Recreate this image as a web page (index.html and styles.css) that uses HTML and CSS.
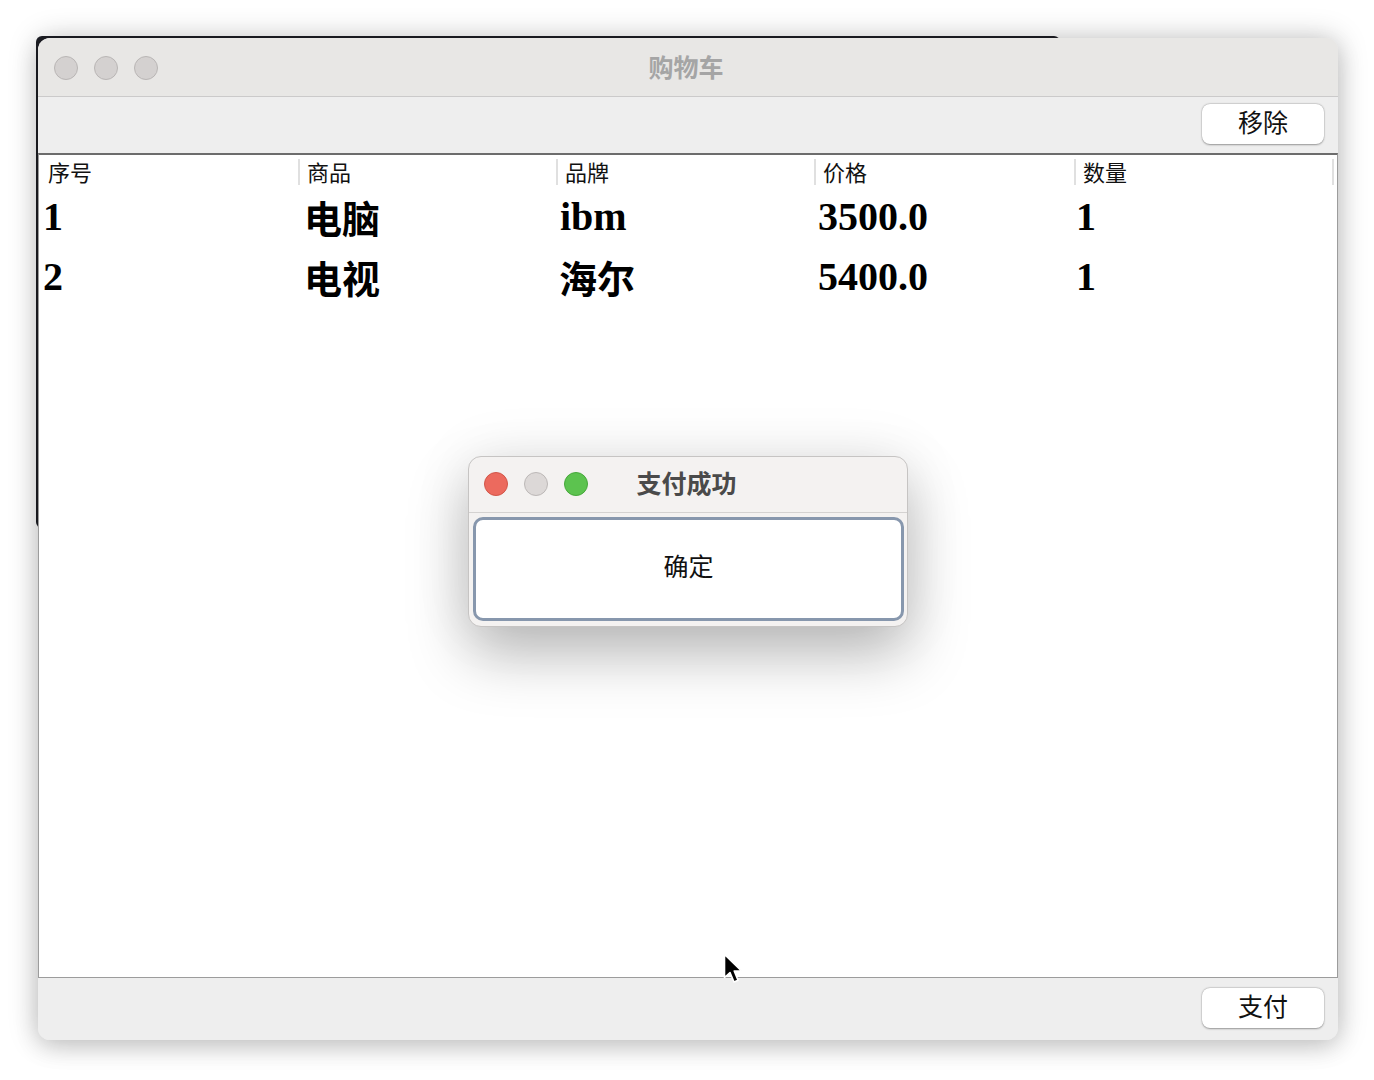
FILE: index.html
```html
<!DOCTYPE html>
<html lang="zh">
<head>
<meta charset="utf-8">
<title>购物车</title>
<link rel="stylesheet" href="styles.css">
</head>
<body>
<div class="desktop">
  <div class="bg-window"></div>
  <div class="window">
    <div class="titlebar">
      <div class="lights">
        <span class="light gray"></span>
        <span class="light gray"></span>
        <span class="light gray"></span>
      </div>
      <div class="title">购物车</div>
    </div>
    <div class="toolbar">
      <button class="btn">移除</button>
    </div>
    <div class="table">
      <div class="thead">
        <div class="th">序号</div>
        <div class="th">商品</div>
        <div class="th">品牌</div>
        <div class="th">价格</div>
        <div class="th">数量</div>
      </div>
      <div class="tr">
        <div class="td">1</div>
        <div class="td cjk">电脑</div>
        <div class="td">ibm</div>
        <div class="td">3500.0</div>
        <div class="td">1</div>
      </div>
      <div class="tr">
        <div class="td">2</div>
        <div class="td cjk">电视</div>
        <div class="td cjk">海尔</div>
        <div class="td">5400.0</div>
        <div class="td">1</div>
      </div>
    </div>
    <div class="bottombar">
      <button class="btn">支付</button>
    </div>
  </div>

  <div class="dialog">
    <div class="dtitlebar">
      <div class="lights">
        <span class="light red"></span>
        <span class="light dgray"></span>
        <span class="light green"></span>
      </div>
      <div class="dtitle">支付成功</div>
    </div>
    <div class="dbody">
      <button class="okbtn">确定</button>
    </div>
  </div>

  <svg class="cursor" width="24" height="34" viewBox="0 0 24 34">
    <path d="M1.5 1.5 L1.5 24.5 L7 19.5 L11 29 L15 27.3 L11.2 18 L18.5 18 Z" fill="#000" stroke="#fff" stroke-width="1.6" stroke-linejoin="round"/>
  </svg>
</div>
</body>
</html>
```

FILE: styles.css
```css
* { box-sizing: border-box; }
html, body { margin: 0; padding: 0; background: #ffffff; }
body {
  width: 1374px;
  height: 1080px;
  overflow: hidden;
  font-family: "Noto Sans CJK SC", "Noto Sans", sans-serif;
}
.desktop {
  position: relative;
  width: 1374px;
  height: 1080px;
}
.bg-window {
  position: absolute;
  left: 36px;
  top: 36px;
  width: 1024px;
  height: 492px;
  background: #1d1e25;
  border-radius: 6px;
}
.window {
  position: absolute;
  left: 38px;
  top: 38px;
  width: 1300px;
  height: 1002px;
  border-radius: 12px;
  overflow: hidden;
  display: flex;
  flex-direction: column;
  background: #eeeeee;
  box-shadow: 0 0 30px rgba(0,0,0,0.22), 0 8px 24px rgba(0,0,0,0.12);
}
.titlebar {
  position: relative;
  height: 59px;
  flex: none;
  background: #e8e7e5;
  border-bottom: 1px solid #cbcaca;
  display: flex;
  align-items: center;
  justify-content: center;
}
.lights {
  position: absolute;
  left: 16px;
  top: 18px;
  display: flex;
  gap: 16px;
}
.light {
  width: 24px;
  height: 24px;
  border-radius: 50%;
  display: block;
}
.light.gray { background: #d4d1d0; border: 1px solid #b9b6b5; }
.light.red { background: #ec6a5e; border: 1px solid #d25649; }
.light.dgray { background: #dcd8d7; border: 1px solid #bcb8b7; }
.light.green { background: #5cc34f; border: 1px solid #46a83b; }
.title {
  font-size: 25px;
  font-weight: 700;
  color: #a5a5a5;
  line-height: 1;
  margin-left: -4px;
  padding-bottom: 2px;
}
.toolbar {
  height: 56px;
  flex: none;
  display: flex;
  justify-content: flex-end;
  align-items: flex-start;
  padding: 7px 14px 0 0;
  background: #eeeeee;
}
.btn {
  width: 122px;
  height: 40px;
  border: none;
  border-radius: 8px;
  background: #ffffff;
  box-shadow: 0 0.5px 2px rgba(0,0,0,0.35), 0 0 0 0.5px rgba(0,0,0,0.08);
  font-family: "Noto Sans CJK SC", sans-serif;
  font-size: 25px;
  color: #111;
  line-height: 1;
  padding: 0 0 5px 0;
  display: flex;
  align-items: center;
  justify-content: center;
}
.table {
  flex: 1;
  background: #ffffff;
  border-top: 2px solid #6c6c6c;
  border-left: 1px solid #9c9c9c;
  border-right: 1px solid #9c9c9c;
  border-bottom: 1px solid #9c9c9c;
  padding-left: 1px;
}
.thead, .tr {
  display: grid;
  grid-template-columns: 260px 258px 258px 260px 258px;
}
.thead {
  height: 32px;
  padding-top: 4px;
}
.th {
  font-size: 22px;
  line-height: 24px;
  height: 26px;
  color: #111;
  padding-left: 7px;
  border-right: 2px solid #e0e0e0;
}
.th:first-child { padding-left: 8px; }
.tr {
  height: 60px;
  align-items: center;
}
.td {
  font-family: "Liberation Serif", "Noto Sans CJK SC", serif;
  font-weight: 700;
  font-size: 40px;
  line-height: 1;
  color: #000;
  padding-left: 2px;
}
.td:first-child { padding-left: 3px; }
.td:nth-child(5) { padding-left: 0; }
.td.cjk {
  font-family: "Noto Sans CJK SC", serif;
  font-size: 38px;
  padding-left: 4px;
}
.td.cjk:nth-child(3) { padding-left: 1px; }
.bottombar {
  height: 62px;
  flex: none;
  display: flex;
  justify-content: flex-end;
  align-items: flex-start;
  padding: 10px 14px 0 0;
  background: #eeeeee;
}
.dialog {
  position: absolute;
  left: 468px;
  top: 456px;
  width: 440px;
  height: 171px;
  border-radius: 13px;
  background: #f4f2f1;
  border: 1px solid #c6c4c3;
  overflow: hidden;
  box-shadow: 0 28px 60px rgba(0,0,0,0.26), 0 0 60px rgba(0,0,0,0.08);
  display: flex;
  flex-direction: column;
}
.dtitlebar {
  position: relative;
  height: 56px;
  flex: none;
  border-bottom: 1px solid #d4d2d1;
  display: flex;
  align-items: center;
  justify-content: center;
}
.dtitlebar .lights { left: 15px; top: 15px; }
.dtitle {
  font-size: 25px;
  font-weight: 700;
  color: #4a4a4a;
  line-height: 1;
  padding-bottom: 4px;
  margin-left: -3px;
}
.dbody {
  flex: 1;
  padding: 4px 3px 5px 4px;
  display: flex;
}
.okbtn {
  flex: 1;
  background: #ffffff;
  border: 3px solid #8797ad;
  border-radius: 10px;
  font-family: "Noto Sans CJK SC", sans-serif;
  font-size: 25px;
  color: #111;
  line-height: 1;
  display: flex;
  align-items: center;
  justify-content: center;
  padding: 0 0 7px 0;
}
.cursor {
  position: absolute;
  left: 723px;
  top: 953px;
}
```
